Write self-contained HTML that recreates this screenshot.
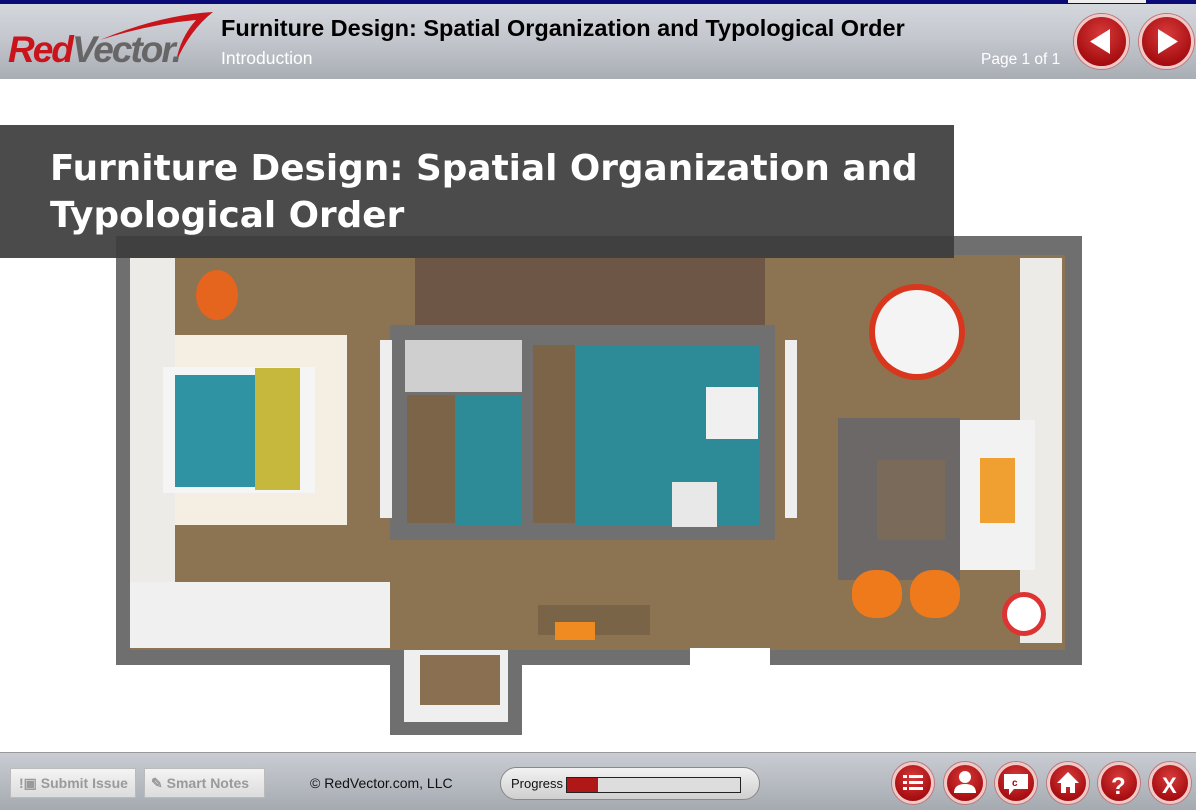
<!DOCTYPE html>
<html><head><meta charset="utf-8"><style>
*{margin:0;padding:0;box-sizing:border-box}
body{width:1196px;height:810px;overflow:hidden;position:relative;background:#fff;font-family:"Liberation Sans",Arial,sans-serif}
.a{position:absolute}
.hdr{left:0;top:0;width:1196px;height:79px;background:linear-gradient(#d6d9de,#c3c7cd 50%,#a9adb4)}
.ftr{left:0;top:752px;width:1196px;height:58px;background:linear-gradient(#c9ccd2,#b4b8bf 60%,#a5a9b0);border-top:1px solid #999}
.rb{border-radius:50%;background:radial-gradient(circle at 50% 35%,#d83a3a,#a80f12 70%,#8a0a0c);border:3px solid #f0c8c8;box-shadow:0 0 0 1px #b77}
.fb{height:30px;background:linear-gradient(#f4f4f4,#dcdcdc);border:1px solid #bbb;color:#9a9a9a;font-weight:bold;font-size:14px;line-height:28px;font-family:"Liberation Sans Narrow","Liberation Sans",sans-serif}
</style></head><body>
<div class="a hdr"></div>
<div class="a" style="left:0;top:0;width:1196px;height:4px;background:#0b0b78"></div>
<div class="a" style="left:1068px;top:0;width:78px;height:3px;background:#eee"></div>
<svg class="a" style="left:0;top:0" width="220" height="78"><path d="M100 40 Q160 15 213 12 Q190 30 176 62 Q180 38 196 20 Q150 24 100 40Z" fill="#c8141a"/>
<text x="8" y="62" font-family="Liberation Sans" font-weight="bold" font-style="italic" font-size="37" fill="#c8141a" letter-spacing="-2">Red</text>
<text x="72" y="62" font-family="Liberation Sans" font-weight="bold" font-style="italic" font-size="37" fill="#666" letter-spacing="-2">Vector.</text></svg>
<div class="a" style="left:221px;top:15px;font-size:23.5px;font-weight:bold;color:#000">Furniture Design: Spatial Organization and Typological Order</div>
<div class="a" style="left:221px;top:48px;font-size:17.5px;color:#fff">Introduction</div>
<div class="a" style="left:981px;top:51px;font-size:15.5px;color:#fff">Page 1 of 1</div>
<div class="a rb" style="left:1074px;top:14px;width:55px;height:55px"></div>
<div class="a rb" style="left:1139px;top:14px;width:55px;height:55px"></div>
<svg class="a" style="left:1074px;top:14px" width="120" height="55"><path d="M16 27.5 L36 15 L36 40Z" fill="#fff"/><path d="M104 27.5 L84 15 L84 40Z" fill="#fff"/></svg>

<div class="a" style="left:116px;top:236px;width:966px;height:429px;background:#6f6f6f"></div>
<div class="a" style="left:390px;top:645px;width:132px;height:90px;background:#6f6f6f"></div>
<div class="a" style="left:404px;top:650px;width:104px;height:72px;background:#efefef"></div>
<div class="a" style="left:420px;top:655px;width:80px;height:50px;background:#8a7050"></div>
<div class="a" style="left:130px;top:255px;width:935px;height:395px;background:#8c7352"></div>
<div class="a" style="left:130px;top:258px;width:45px;height:325px;background:#ecebe8"></div>
<div class="a" style="left:1020px;top:258px;width:42px;height:385px;background:#ecebe8"></div>
<div class="a" style="left:130px;top:582px;width:260px;height:66px;background:#f0f0f0"></div>
<div class="a" style="left:415px;top:258px;width:350px;height:67px;background:#6e5646"></div>
<div class="a" style="left:175px;top:335px;width:172px;height:190px;background:#f4efe2"></div>
<div class="a" style="left:163px;top:367px;width:152px;height:126px;background:#f5f5f5"></div>
<div class="a" style="left:175px;top:375px;width:80px;height:112px;background:#2f93a3"></div>
<div class="a" style="left:255px;top:368px;width:45px;height:122px;background:#c6b83c"></div>
<div class="a" style="left:196px;top:270px;width:42px;height:50px;border-radius:50%;background:#e5641e"></div>
<div class="a" style="left:390px;top:325px;width:140px;height:215px;background:#707070"></div>
<div class="a" style="left:405px;top:340px;width:117px;height:52px;background:#cfcfcf"></div>
<div class="a" style="left:407px;top:395px;width:48px;height:128px;background:#7b6447"></div>
<div class="a" style="left:455px;top:395px;width:67px;height:130px;background:#2d8a97"></div>
<div class="a" style="left:528px;top:325px;width:247px;height:215px;background:#707070"></div>
<div class="a" style="left:533px;top:345px;width:42px;height:178px;background:#7b6447"></div>
<div class="a" style="left:575px;top:345px;width:185px;height:180px;background:#2d8a97"></div>
<div class="a" style="left:706px;top:387px;width:52px;height:52px;background:#f0f0f0"></div>
<div class="a" style="left:672px;top:482px;width:45px;height:45px;background:#e8e8e8"></div>
<div class="a" style="left:380px;top:340px;width:12px;height:178px;background:#eee"></div>
<div class="a" style="left:785px;top:340px;width:12px;height:178px;background:#eee"></div>
<div class="a" style="left:875px;top:290px;width:84px;height:84px;border-radius:50%;background:#f4f4f4;box-shadow:0 0 0 6px #d9361e"></div>
<div class="a" style="left:838px;top:418px;width:122px;height:162px;background:#6c6868"></div>
<div class="a" style="left:877px;top:460px;width:68px;height:80px;background:#7a6a5a"></div>
<div class="a" style="left:960px;top:420px;width:75px;height:150px;background:#f2f2f2"></div>
<div class="a" style="left:980px;top:458px;width:35px;height:65px;background:#f0a030"></div>
<div class="a" style="left:852px;top:570px;width:50px;height:48px;border-radius:45%;background:#ee7a1c"></div>
<div class="a" style="left:910px;top:570px;width:50px;height:48px;border-radius:45%;background:#ee7a1c"></div>
<div class="a" style="left:1002px;top:592px;width:44px;height:44px;border-radius:50%;border:5px solid #d33;background:#fff"></div>
<div class="a" style="left:538px;top:605px;width:112px;height:30px;background:#7a6447"></div>
<div class="a" style="left:555px;top:622px;width:40px;height:18px;background:#ef8b20"></div>
<div class="a" style="left:690px;top:648px;width:80px;height:18px;background:#fff"></div>

<div class="a" style="left:0;top:125px;width:954px;height:133px;background:rgba(60,60,60,.92)"></div>
<div class="a" style="left:50px;top:145px;font-family:'DejaVu Sans',sans-serif;font-weight:bold;font-size:35.8px;line-height:47px;color:#fff">Furniture Design: Spatial Organization and<br>Typological Order</div>

<div class="a ftr"></div>
<div class="a fb" style="left:10px;top:768px;width:126px;padding-left:8px">!▣ Submit Issue</div>
<div class="a fb" style="left:144px;top:768px;width:121px;padding-left:6px">✎ Smart Notes</div>
<div class="a" style="left:310px;top:775px;font-size:14px;color:#111">© RedVector.com, LLC</div>
<div class="a" style="left:500px;top:767px;width:260px;height:33px;border-radius:17px;background:linear-gradient(#f2f2f2,#cfcfcf);border:1px solid #888"></div>
<div class="a" style="left:511px;top:776px;font-size:13px;color:#111">Progress</div>
<div class="a" style="left:566px;top:777px;width:175px;height:16px;background:#ddd;border:1px solid #222"></div>
<div class="a" style="left:567px;top:778px;width:31px;height:14px;background:#b01818"></div>
<div class="a rb" style="left:892px;top:762px;width:42px;height:42px"></div>
<div class="a rb" style="left:944px;top:762px;width:42px;height:42px"></div>
<div class="a rb" style="left:995px;top:762px;width:42px;height:42px"></div>
<div class="a rb" style="left:1047px;top:762px;width:42px;height:42px"></div>
<div class="a rb" style="left:1098px;top:762px;width:42px;height:42px"></div>
<div class="a rb" style="left:1149px;top:762px;width:42px;height:42px"></div>
<svg class="a" style="left:880px;top:752px" width="316" height="58" fill="#fff">
<rect x="23" y="23" width="4" height="3"/><rect x="29" y="23" width="14" height="3"/><rect x="23" y="29" width="4" height="3"/><rect x="29" y="29" width="14" height="3"/><rect x="23" y="35" width="4" height="3"/><rect x="29" y="35" width="14" height="3"/>
<circle cx="85" cy="25" r="6"/><path d="M74 41 Q74 32 85 32 Q96 32 96 41Z"/>
<path d="M124 22 h24 v15 h-14 l-5 6 v-6 h-5Z"/><text x="132" y="34" font-size="10" font-weight="bold" fill="#a00" font-family="Liberation Sans">c</text>
<path d="M188 20 L177 31 h4 v10 h5 v-6 h4 v6 h5 v-10 h4Z"/>
<text x="231" y="42" font-size="24" font-weight="bold" font-family="Liberation Sans">?</text>
<text x="282" y="41" font-size="22" font-weight="bold" font-family="Liberation Sans">X</text>
</svg>
</body></html>
